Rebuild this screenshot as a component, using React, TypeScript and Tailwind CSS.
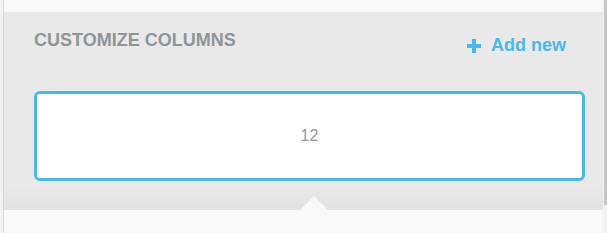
import React from 'react';

export default function App() {
  return (
    <div className="flex h-[233px] w-[607px] overflow-hidden bg-[#f8f8f8] font-['Liberation_Sans',Arial,sans-serif]">
      {/* left gutter */}
      <div className="w-[3px] bg-[#f3f3f3]" />
      <div className="w-px bg-[#d4d4d4]" />

      <div className="flex flex-1 flex-col">
        <div className="h-[12px] shrink-0" />
        <div className="relative h-[198px] shrink-0 bg-[linear-gradient(to_bottom,#e9e9e9_88%,#e2e2e2)] pl-[30px] pr-[18px] pt-[19px]">
          <div className="flex h-[60px] items-start justify-between">
            <h3 className="text-[18px] font-bold leading-[18px] text-[#8f9598]">CUSTOMIZE COLUMNS</h3>
            <button className="mr-[19px] mt-[5px] flex items-center gap-[10px] text-[18px] font-bold leading-[18px] text-[#4cb8e9]">
              <svg width="14" height="14" viewBox="0 0 14 14" className="mt-[2px]">
                <rect x="5" y="0" width="4" height="14" fill="currentColor" />
                <rect x="0" y="5" width="14" height="4" fill="currentColor" />
              </svg>
              Add new
            </button>
          </div>

          <div className="flex h-[90px] items-center justify-center rounded-[6px] border-[3px] border-[#4cb8e9] bg-white text-[16px] text-[#999999]">
            12
          </div>

          {/* notch */}
          <div className="absolute bottom-0 left-[296px] h-0 w-0 border-x-[14px] border-b-[14px] border-x-transparent border-b-[#f8f8f8]" />
        </div>
      </div>

      {/* right edge / scrollbar */}
      <div className="w-px bg-[#f2f2f2]" />
      <div className="flex w-[3px] flex-col">
        <div className="h-[205px] bg-[#c6c6c6]" />
        <div className="flex-1 bg-[#f1f1f1]" />
      </div>
    </div>
  );
}
